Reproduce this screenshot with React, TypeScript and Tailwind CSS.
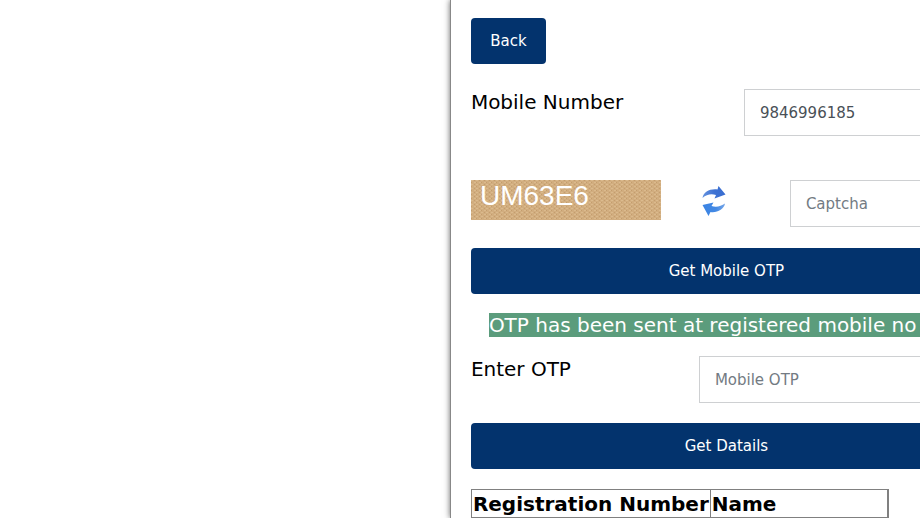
import type { ButtonHTMLAttributes, InputHTMLAttributes } from "react";

function Button({ className = "", ...props }: ButtonHTMLAttributes<HTMLButtonElement>) {
  return (
    <button
      type="button"
      className={`h-[46px] cursor-pointer rounded bg-[#03336d] text-[15px] text-white ${className}`}
      {...props}
    />
  );
}

function TextInput({ className = "", ...props }: InputHTMLAttributes<HTMLInputElement>) {
  return (
    <input
      className={`h-[47px] min-w-0 flex-1 border border-[#ced0d2] bg-white px-[15px] text-[15px] text-[#495057] placeholder:text-[#737b83] ${className}`}
      {...props}
    />
  );
}

function Captcha() {
  return (
    <svg className="h-10 w-[190px] shrink-0" viewBox="0 0 190 40" role="img" aria-label="Captcha code">
      <defs>
        <pattern id="weave" width="5" height="4" patternUnits="userSpaceOnUse">
          <rect width="5" height="4" fill="#d1ad7f" />
          <path d="M0 0.500h2M3 2.500h2" stroke="#dbba8d" />
          <path d="M3 0.500h1M0 2.500h1" stroke="#c49d6d" />
        </pattern>
      </defs>
      <rect width="190" height="40" fill="url(#weave)" />
      <text x="9" y="25" fill="#fff" fontSize="28" fontFamily="Liberation Sans, sans-serif">
        UM63E6
      </text>
    </svg>
  );
}

function RefreshIcon() {
  return (
    <svg className="size-8" viewBox="0 0 32 32" aria-hidden="true">
      <defs>
        <linearGradient id="topArrow" x1="0" x2="1">
          <stop offset="0" stopColor="#6593df" />
          <stop offset="0.5" stopColor="#3e72d3" />
          <stop offset="1" stopColor="#386dd0" />
        </linearGradient>
        <linearGradient id="bottomArrow" x1="0" x2="1">
          <stop offset="0" stopColor="#3a83e3" />
          <stop offset="0.6" stopColor="#4389e4" />
          <stop offset="1" stopColor="#75a5e7" />
        </linearGradient>
      </defs>
      <path d="M4.500 14C5.500 8 12 4.500 19.500 5.500L20.500 2L27.500 10.500L16.500 14.500L18 11C13 9.500 8.500 10.500 4.500 14Z" fill="url(#topArrow)" />
      <path d="M27 19.500C26 25.500 19 29 12.500 28L10.500 32L4.500 21L15.500 18.500L13.500 22C18 23.500 23 22.500 27 19.500Z" fill="url(#bottomArrow)" />
    </svg>
  );
}

export default function App() {
  return (
    <div className="flex min-h-screen overflow-hidden bg-white font-['Verdana','DejaVu_Sans',sans-serif] text-xl text-black">
      <div className="w-[48.9%] shrink-0" />
      <main className="w-[552px] shrink-0 border-l border-[#888] px-5 pt-[18px] shadow-[0_0_6px_#666]">
        <form onSubmit={(event) => event.preventDefault()}>
          <Button className="w-[75px]">Back</Button>

          <div className="mt-[25px] flex items-start">
            <label htmlFor="mobile" className="w-[273px] leading-[26px]">Mobile Number</label>
            <TextInput id="mobile" type="tel" defaultValue="9846996185" />
          </div>

          <div className="mt-11 flex items-start">
            <Captcha />
            <button type="button" aria-label="Refresh captcha" className="ml-[37px] mt-1 cursor-pointer">
              <RefreshIcon />
            </button>
            <TextInput className="ml-[60px]" aria-label="Captcha" placeholder="Captcha" />
          </div>

          <Button className="mt-[21px] w-full">Get Mobile OTP</Button>

          <p className="ml-[18px] mt-[19px] whitespace-nowrap leading-6 text-white" role="status">
            <span className="block bg-[#5b9c7c]">OTP has been sent at registered mobile no</span>
          </p>

          <div className="mt-[19px] flex items-start">
            <label htmlFor="otp" className="w-[228px] leading-[26px]">Enter OTP</label>
            <TextInput id="otp" inputMode="numeric" placeholder="Mobile OTP" />
          </div>

          <Button className="mt-5 w-full">Get Datails</Button>
        </form>

        <table className="mt-5 w-[418px] border-collapse border border-r-2 border-[#808080]">
          <thead>
            <tr className="h-7 text-left leading-[26px]">
              <th className="w-[238px] whitespace-nowrap border border-[#808080] px-px font-bold">Registration Number</th>
              <th className="border border-r-2 border-[#808080] px-px font-bold">Name</th>
            </tr>
          </thead>
        </table>
      </main>
    </div>
  );
}
